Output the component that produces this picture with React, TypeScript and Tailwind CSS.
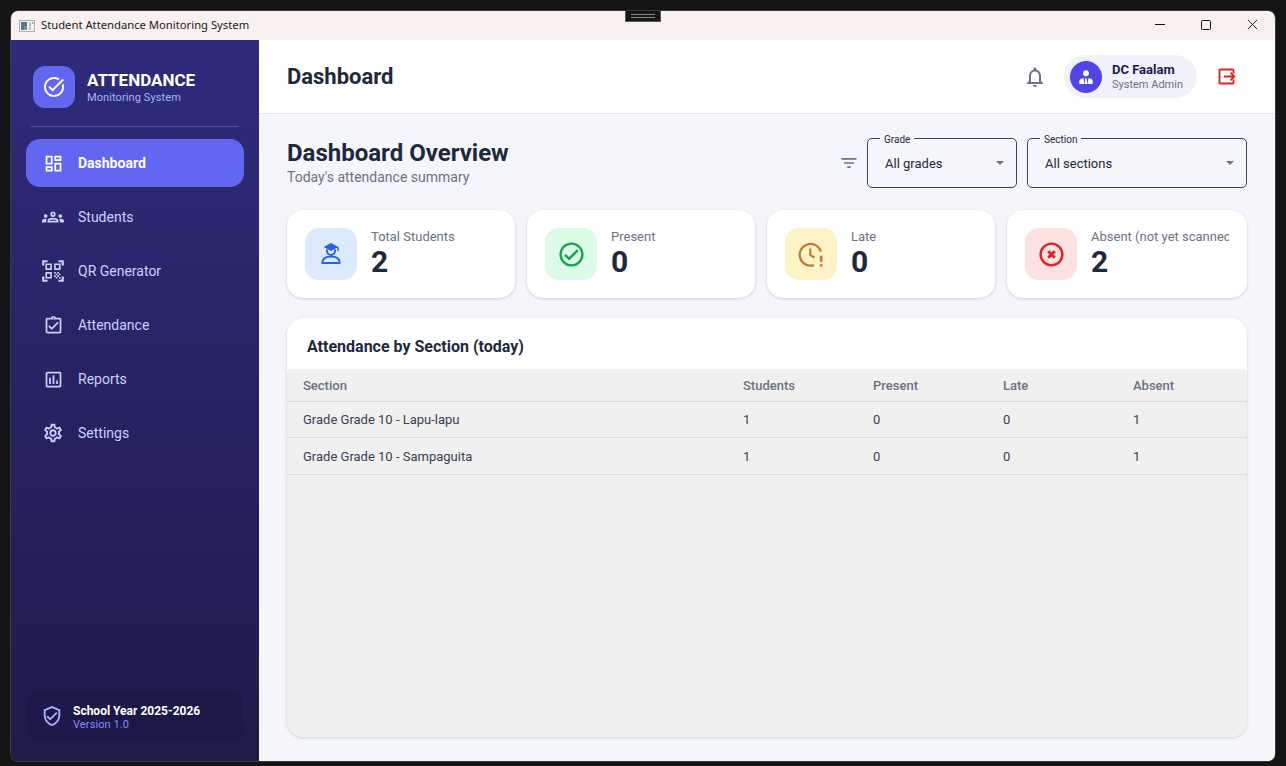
import React from "react";

const P = ({ d, className }: { d: string; className?: string }) => (
  <svg viewBox="0 0 24 24" fill="currentColor" className={className}>
    <path d={d} />
  </svg>
);

const I = {
  dash: "M19 5v2h-4V5h4M9 5v6H5V5h4m10 8v6h-4v-6h4M9 17v2H5v-2h4M21 3h-8v6h8V3zM11 3H3v10h8V3zm10 8h-8v10h8V11zm-10 4H3v6h8v-6z",
  groups:
    "M4 13c1.1 0 2-.9 2-2s-.9-2-2-2-2 .9-2 2 .9 2 2 2zm1.13 1.1c-.37-.06-.74-.1-1.13-.1-.99 0-1.93.21-2.78.58C.48 14.9 0 15.62 0 16.43V18h4.5v-1.61c0-.83.23-1.61.63-2.29zM20 13c1.1 0 2-.9 2-2s-.9-2-2-2-2 .9-2 2 .9 2 2 2zm4 3.43c0-.81-.48-1.53-1.22-1.85-.85-.37-1.79-.58-2.78-.58-.39 0-.76.04-1.13.1.4.68.63 1.46.63 2.29V18H24v-1.57zm-7.76-2.78c-1.17-.52-2.61-.9-4.24-.9-1.63 0-3.07.39-4.24.9C6.68 14.13 6 15.21 6 16.39V18h12v-1.61c0-1.18-.68-2.26-1.76-2.74zM8.07 16c.09-.23.13-.39.91-.69.97-.38 1.99-.56 3.02-.56s2.05.18 3.02.56c.77.3.81.46.91.69H8.07zM12 8c.55 0 1 .45 1 1s-.45 1-1 1-1-.45-1-1 .45-1 1-1m0-2c-1.66 0-3 1.34-3 3s1.34 3 3 3 3-1.34 3-3-1.34-3-3-3z",
  qr: "M9.5 6.5v3h-3v-3h3M11 5H5v6h6V5zm-1.5 9.5v3h-3v-3h3M11 13H5v6h6v-6zm6.5-6.5v3h-3v-3h3M19 5h-6v6h6V5zm-6 8h1.5v1.5H13V13zm1.5 1.5H16V16h-1.5v-1.5zM16 13h1.5v1.5H16V13zm-3 3h1.5v1.5H13V16zm1.5 1.5H16V19h-1.5v-1.5zM16 16h1.5v1.5H16V16zm1.5-1.5H19V16h-1.5v-1.5zm0 3H19V19h-1.5v-1.5zM22 7h-2V4h-3V2h5v5zm0 15v-5h-2v3h-3v2h5zM2 22h5v-2H4v-3H2v5zM2 2v5h2V4h3V2H2z",
  clip: "M18 9l-1.41-1.42L10 14.17l-2.59-2.58L6 13l4 4zm1-6h-4.18C14.4 1.84 13.3 1 12 1c-1.3 0-2.4.84-2.82 2H5c-.14 0-.27.01-.4.04-.39.08-.74.28-1.01.55-.18.18-.33.4-.43.64-.1.23-.16.49-.16.77v14c0 .27.06.54.16.78s.25.45.43.64c.27.27.62.47 1.01.55.13.02.26.03.4.03h14c1.1 0 2-.9 2-2V5c0-1.1-.9-2-2-2zm-7-.25c.41 0 .75.34.75.75s-.34.75-.75.75-.75-.34-.75-.75.34-.75.75-.75zM19 19H5V5h14v14z",
  report:
    "M19 3H5c-1.1 0-2 .9-2 2v14c0 1.1.9 2 2 2h14c1.1 0 2-.9 2-2V5c0-1.1-.9-2-2-2zm0 16H5V5h14v14zM7 10h2v7H7zm4-3h2v10h-2zm4 6h2v4h-2z",
  gear: "M19.43 12.98c.04-.32.07-.64.07-.98 0-.34-.03-.66-.07-.98l2.11-1.65c.19-.15.24-.42.12-.64l-2-3.46c-.09-.16-.26-.25-.44-.25-.06 0-.12.01-.17.03l-2.49 1c-.52-.4-1.08-.73-1.69-.98l-.38-2.65C14.46 2.18 14.25 2 14 2h-4c-.25 0-.46.18-.49.42l-.38 2.65c-.61.25-1.17.59-1.69.98l-2.49-1c-.06-.02-.12-.03-.18-.03-.17 0-.34.09-.43.25l-2 3.46c-.13.22-.07.49.12.64l2.11 1.65c-.04.32-.07.65-.07.98 0 .33.03.66.07.98l-2.11 1.65c-.19.15-.24.42-.12.64l2 3.46c.09.16.26.25.44.25.06 0 .12-.01.17-.03l2.49-1c.52.4 1.08.73 1.69.98l.38 2.65c.03.24.24.42.49.42h4c.25 0 .46-.18.49-.42l.38-2.65c.61-.25 1.17-.59 1.69-.98l2.49 1c.06.02.12.03.18.03.17 0 .34-.09.43-.25l2-3.46c.12-.22.07-.49-.12-.64l-2.11-1.65zm-1.98-1.71c.04.31.05.52.05.73 0 .21-.02.43-.05.73l-.14 1.13.89.7 1.08.84-.7 1.21-1.27-.51-1.04-.42-.9.68c-.43.32-.84.56-1.25.73l-1.06.43-.16 1.13-.2 1.35h-1.4l-.19-1.35-.16-1.13-1.06-.43c-.43-.18-.83-.41-1.23-.71l-.91-.7-1.06.43-1.27.51-.7-1.21 1.08-.84.89-.7-.14-1.13c-.03-.31-.05-.54-.05-.74s.02-.43.05-.73l.14-1.13-.89-.7-1.08-.84.7-1.21 1.27.51 1.04.42.9-.68c.43-.32.84-.56 1.25-.73l1.06-.43.16-1.13.2-1.35h1.39l.19 1.35.16 1.13 1.06.43c.43.18.83.41 1.23.71l.91.7 1.06-.43 1.27-.51.7 1.21-1.07.85-.89.7.14 1.13zM12 8c-2.21 0-4 1.79-4 4s1.79 4 4 4 4-1.79 4-4-1.79-4-4-4zm0 6c-1.1 0-2-.9-2-2s.9-2 2-2 2 .9 2 2-.9 2-2 2z",
  task: "M22 5.18L10.59 16.6l-4.24-4.24 1.41-1.41 2.83 2.83 10-10L22 5.18zm-2.21 5.04c.13.57.21 1.17.21 1.78 0 4.42-3.58 8-8 8s-8-3.58-8-8 3.58-8 8-8c1.58 0 3.04.46 4.28 1.25l1.44-1.44C16.1 2.67 14.13 2 12 2 6.48 2 2 6.48 2 12s4.48 10 10 10 10-4.48 10-10c0-1.19-.22-2.33-.6-3.39l-1.61 1.61z",
  shield:
    "M12 1 3 5v6c0 5.55 3.84 10.74 9 12 5.16-1.26 9-6.45 9-12V5l-9-4zm7 10c0 4.52-2.98 8.69-7 9.93-4.02-1.24-7-5.41-7-9.93V6.3l7-3.11 7 3.11V11zm-11.59.59L6 13l4 4 8-8-1.41-1.42L10 14.17z",
  bell: "M12 22c1.1 0 2-.9 2-2h-4c0 1.1.9 2 2 2zm6-6v-5c0-3.07-1.63-5.64-4.5-6.32V4c0-.83-.67-1.5-1.5-1.5s-1.5.67-1.5 1.5v.68C7.64 5.36 6 7.92 6 11v5l-2 2v1h16v-1l-2-2zm-2 1H8v-6c0-2.48 1.51-4.5 4-4.5s4 2.02 4 4.5v6z",
  filter: "M10 18h4v-2h-4v2zM3 6v2h18V6H3zm3 7h12v-2H6v2z",
  check:
    "M12 2C6.48 2 2 6.48 2 12s4.48 10 10 10 10-4.48 10-10S17.52 2 12 2zm0 18c-4.41 0-8-3.59-8-8s3.59-8 8-8 8 3.59 8 8-3.59 8-8 8zm4.59-12.42L10 14.17l-2.59-2.58L6 13l4 4 8-8z",
};

const nav = [
  { label: "Students", d: I.groups, size: "size-[22px]" },
  { label: "QR Generator", d: I.qr, size: "size-[26px]" },
  { label: "Attendance", d: I.clip, size: "size-[21px]" },
  { label: "Reports", d: I.report, size: "size-[21px]" },
  { label: "Settings", d: I.gear, size: "size-[22px]" },
];

const rows = [
  { s: "Grade Grade 10 - Lapu-lapu", h: "h-[36px]", v: ["1", "0", "0", "1"] },
  { s: "Grade Grade 10 - Sampaguita", h: "h-[37px] pt-[1px]", v: ["1", "0", "0", "1"] },
];

function Select({ label, value, w }: { label: string; value: string; w: string }) {
  return (
    <div className={`relative h-[50px] ${w} rounded-[5px] border border-[#3f4350] flex items-center justify-between pl-[17px] pr-[12px]`}>
      <span className="absolute -top-[5px] left-[12px] bg-[#f4f6fb] px-[4px] text-[10px] leading-[11px] text-[#1f2937]">{label}</span>
      <span className="pt-[2px] text-[13px] text-[#1f2937]">{value}</span>
      <span className="size-0 border-x-[4px] border-t-[4px] border-x-transparent border-t-[#757575]" />
    </div>
  );
}

function StatCard({ label, value, tint, icon }: { label: string; value: string; tint: string; icon: React.ReactNode }) {
  return (
    <div className="h-[88px] rounded-[16px] bg-white shadow-[0_1px_3px_rgba(30,41,59,0.18)] flex items-center gap-[14px] px-[18px] overflow-hidden">
      <div className={`size-[52px] shrink-0 rounded-[14px] flex items-center justify-center ${tint}`}>{icon}</div>
      <div className="min-w-0 flex-1 overflow-hidden">
        <div className="text-[13px] leading-[16px] whitespace-nowrap text-[#6b7280]">{label}</div>
        <div className="text-[30px] leading-[34px] font-bold text-[#1e293b]">{value}</div>
      </div>
    </div>
  );
}

export default function App() {
  return (
    <div className="h-[766px] w-[1286px] bg-[#141414] pt-[10px] pl-[10px] overflow-hidden font-['Roboto',sans-serif]">
      <div className="relative h-[752px] w-[1266px] rounded-[8px] border border-[#3a3a3a] overflow-hidden flex flex-col">
        {/* Title bar */}
        <div className="h-[29px] shrink-0 bg-[#f9f0f0] flex items-center pl-[8px]">
          <svg viewBox="0 0 16 16" className="size-[16px]">
            <rect x="0.5" y="2.5" width="15" height="11" fill="#f4f4f4" stroke="#b0b0b0" />
            <rect x="2" y="4" width="6" height="8" fill="#5b7388" />
            <rect x="5" y="8" width="3" height="4" fill="#6f9c84" />
            <rect x="10" y="4" width="2" height="8" fill="#b4c4d2" />
            <rect x="13" y="4" width="1.5" height="2" fill="#98a6b4" />
          </svg>
          <span className="ml-[6px] text-[11.25px] text-[#1a1a1a] font-['Noto_Sans',sans-serif]">Student Attendance Monitoring System</span>
          <div className="ml-auto flex items-center h-full -mt-[2px]">
            <div className="w-[46px] h-full flex items-center justify-center">
              <span className="w-[10px] h-px bg-[#111]" />
            </div>
            <div className="w-[46px] h-full flex items-center justify-center">
              <span className="size-[10px] rounded-[1.5px] border border-[#111]" />
            </div>
            <div className="w-[46px] h-full flex items-center justify-center">
              <svg viewBox="0 0 12 12" className="size-[11px]" stroke="#111" strokeWidth="1" fill="none">
                <path d="M1 1l10 10M11 1 1 11" />
              </svg>
            </div>
          </div>
        </div>

        {/* Snap handle */}
        <div className="absolute -top-[2px] left-[614px] h-[13px] w-[36px] border border-[#5a5a5a] bg-[#161616] flex flex-col items-center justify-center gap-[2px]">
          <span className="h-px w-[24px] bg-[#8a8a8a]" />
          <span className="h-px w-[24px] bg-[#8a8a8a]" />
        </div>

        <div className="flex flex-1 min-h-0">
          {/* Sidebar */}
          <aside className="w-[248px] shrink-0 bg-gradient-to-b from-[#2f2b7c] to-[#1e1b4b] flex flex-col px-[15px] pt-[26px] pb-[20px]">
            <div className="flex gap-[12px] pl-[7px]">
              <div className="size-[42px] rounded-[12px] bg-[#6366f1] flex items-center justify-center text-white">
                <P d={I.task} className="size-[24px]" />
              </div>
              <div className="pt-[4px]">
                <div className="text-[17px] leading-[20px] font-bold text-white">ATTENDANCE</div>
                <div className="mt-[1px] text-[11px] leading-[13px] tracking-[0.1px] text-[#a5b4fc]">Monitoring System</div>
              </div>
            </div>
            <div className="mt-[18px] mx-[5px] h-px bg-white/20" />
            <nav className="mt-[12px] flex flex-col gap-[6px]">
              <div className="h-[48px] rounded-[14px] bg-[#6366f1] flex items-center text-white">
                <div className="w-[54px] mr-[-2px] flex justify-center"><P d={I.dash} className="size-[21px]" /></div>
                <span className="text-[14px] font-bold">Dashboard</span>
              </div>
              {nav.map((n) => (
                <div key={n.label} className="h-[48px] rounded-[14px] flex items-center text-[#c7d2fe]">
                  <div className="w-[54px] mr-[-2px] flex justify-center"><P d={n.d} className={n.size} /></div>
                  <span className="text-[14px]">{n.label}</span>
                </div>
              ))}
            </nav>
            <div className="mt-auto ml-px mr-px h-[50px] rounded-[12px] bg-[#1c1848] flex items-center gap-[10px] pl-[14px]">
              <P d={I.shield} className="size-[22px] text-[#a5b4fc]" />
              <div className="pt-[4px]">
                <div className="text-[12px] leading-[13px] font-bold text-white">School Year 2025-2026</div>
                <div className="text-[11px] leading-[13px] tracking-[0.1px] text-[#818cf8]">Version 1.0</div>
              </div>
            </div>
          </aside>

          {/* Main */}
          <div className="flex-1 min-w-0 flex flex-col bg-[#f4f6fb]">
            <header className="h-[74px] shrink-0 bg-white border-b border-[#e3e6f0] flex items-center pl-[28px] pr-[38px]">
              <h1 className="text-[22px] font-bold text-[#1e293b]">Dashboard</h1>
              <P d={I.bell} className="ml-auto size-[24px] text-[#6b7280]" />
              <div className="ml-[17px] h-[43px] w-[133px] rounded-full bg-[#f0f1fb] flex items-center pl-[6px] gap-[10px]">
                <div className="size-[32px] rounded-full bg-[#4f46e5] flex items-center justify-center">
                  <svg viewBox="0 0 24 24" className="size-[20px]" fill="#fff">
                    <circle cx="12" cy="7.500" r="3.500" />
                    <path d="M4 20.500v-3c0-2.500 2.500-3.800 5-4.200l1.300 7.200z" />
                    <path d="M20 20.500v-3c0-2.500-2.500-3.800-5-4.200l-1.300 7.200z" />
                    <path d="M11.200 13.500h1.600l.5 7h-2.600z" />
                  </svg>
                </div>
                <div>
                  <div className="text-[13px] leading-[15px] font-bold text-[#1e1b4b]">DC Faalam</div>
                  <div className="mt-[1px] text-[11px] leading-[13px] text-[#6b7280]">System Admin</div>
                </div>
              </div>
              <svg viewBox="0 0 24 24" className="ml-[19px] size-[21px]" fill="none" stroke="#dc2626" strokeWidth="2.200">
                <path d="M20 8.500V5a1 1 0 0 0-1-1H5a1 1 0 0 0-1 1v14a1 1 0 0 0 1 1h14a1 1 0 0 0 1-1v-3.500" />
                <path d="M9 12h12M16.500 7.500 21 12l-4.500 4.500" />
              </svg>
            </header>

            <main className="flex-1 min-h-0 flex flex-col px-[28px] pt-[24px] pb-[24px]">
              <div className="flex items-center h-[50px]">
                <div className="self-start">
                  <h2 className="text-[24px] leading-[30px] font-bold text-[#1e293b]">Dashboard Overview</h2>
                  <p className="text-[14px] leading-[18px] text-[#6b7280]">Today's attendance summary</p>
                </div>
                <div className="ml-auto flex items-center gap-[10px]">
                  <P d={I.filter} className="size-[20px] mr-[-2px] text-[#6b7280]" />
                  <Select label="Grade" value="All grades" w="w-[150px]" />
                  <Select label="Section" value="All sections" w="w-[220px]" />
                </div>
              </div>

              <div className="mt-[22px] grid grid-cols-[228px_228px_228px_1fr] gap-[12px]">
                <StatCard
                  label="Total Students"
                  value="2"
                  tint="bg-[#dbeafe]"
                  icon={
                    <svg viewBox="0 0 24 24" className="size-[24px]" fill="none" stroke="#2563eb" strokeWidth="2">
                      <path d="M12 1.500 5.500 5 12 8.500 18.500 5z" fill="#2563eb" strokeWidth="1" />
                      <path d="M19 5v4" strokeWidth="1.500" />
                      <path d="M8 7.500v1.500a4 4 0 0 0 8 0V7.500" />
                      <path d="M3.500 21v-1.500c0-2.500 3-5 8.500-5s8.500 2.500 8.500 5V21z" />
                    </svg>
                  }
                />
                <StatCard label="Present" value="0" tint="bg-[#dcfce7]" icon={<P d={I.check} className="size-[29px] text-[#16a34a]" />} />
                <StatCard
                  label="Late"
                  value="0"
                  tint="bg-[#fef3c7]"
                  icon={
                    <svg viewBox="0 0 24 24" className="size-[29px]" fill="none" stroke="#c2782a" strokeWidth="1.800">
                      <path d="M19.800 9.500A9 9 0 1 0 14 20.800" />
                      <path d="M11 7v5.500l3.500 2" />
                      <path d="M20 13v5" strokeWidth="2.200" />
                      <path d="M20 20v2" strokeWidth="2.200" />
                    </svg>
                  }
                />
                <StatCard
                  label="Absent (not yet scanned)"
                  value="2"
                  tint="bg-[#fee2e2]"
                  icon={
                    <svg viewBox="0 0 24 24" className="size-[29px]" fill="none" stroke="#dc2626" strokeWidth="2">
                      <circle cx="12" cy="12" r="9" />
                      <path d="M9.300 9.300l5.400 5.400M14.700 9.300l-5.400 5.400" strokeWidth="2.400" />
                    </svg>
                  }
                />
              </div>

              <section className="mt-[20px] flex-1 min-h-0 rounded-[16px] bg-white shadow-[0_1px_3px_rgba(30,41,59,0.18)] overflow-hidden flex flex-col">
                <h3 className="h-[51px] shrink-0 flex items-center pt-[6px] pl-[20px] text-[16px] font-bold text-[#1e293b]">Attendance by Section (today)</h3>
                <div className="flex-1 bg-[#f0f0f0] rounded-t-[4px]">
                  <div className="grid grid-cols-[440px_130px_130px_130px_130px] h-[33px] items-center pt-[1px] border-b border-[#dcdcdc] text-[13px] font-medium text-[#6b7280]">
                    <span className="pl-[16px]">Section</span>
                    <span className="pl-[16px]">Students</span>
                    <span className="pl-[16px]">Present</span>
                    <span className="pl-[16px]">Late</span>
                    <span className="pl-[16px]">Absent</span>
                  </div>
                  {rows.map((r) => (
                    <div key={r.s} className={`grid grid-cols-[440px_130px_130px_130px_130px] ${r.h} items-center border-b border-[#dcdcdc] text-[13px] text-[#374151]`}>
                      <span className="pl-[16px]">{r.s}</span>
                      {r.v.map((v, i) => (
                        <span key={i} className="pl-[16px]">{v}</span>
                      ))}
                    </div>
                  ))}
                </div>
              </section>
            </main>
          </div>
        </div>
      </div>
    </div>
  );
}
